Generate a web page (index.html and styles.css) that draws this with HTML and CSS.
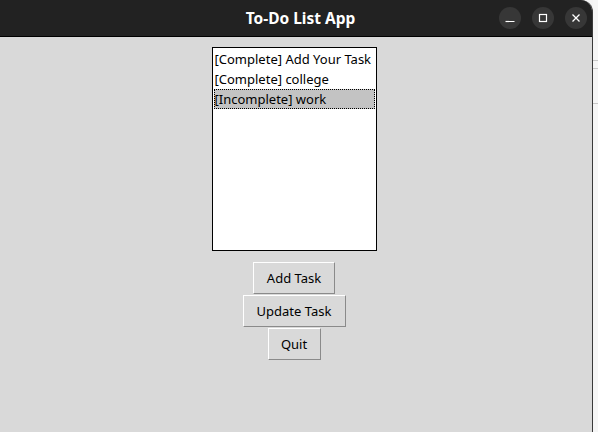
FILE: index.html
```html
<!DOCTYPE html>
<html>
<head>
<meta charset="utf-8">
<link rel="stylesheet" href="styles.css">
</head>
<body>
<div class="screen">
  <div class="window">
    <div class="titlebar">
      <div class="title">To-Do List App</div>
      <div class="controls">
        <div class="ctl"><svg width="22" height="22" viewBox="0 0 22 22"><line x1="6.5" y1="14.5" x2="15.5" y2="14.5" stroke="#fff" stroke-width="1.2"/></svg></div>
        <div class="ctl"><svg width="22" height="22" viewBox="0 0 22 22"><rect x="7.5" y="7.5" width="7" height="7" fill="none" stroke="#fff" stroke-width="1.2"/></svg></div>
        <div class="ctl"><svg width="22" height="22" viewBox="0 0 22 22"><path d="M7.5 7.5 L14.5 14.5 M14.5 7.5 L7.5 14.5" stroke="#fff" stroke-width="1.3"/></svg></div>
      </div>
    </div>
    <div class="content">
      <div class="listbox">
        <div class="item">[Complete] Add Your Task</div>
        <div class="item">[Complete] college</div>
        <div class="item selected">[Incomplete] work</div>
      </div>
      <div class="buttons">
        <button class="btn btn-add">Add Task</button>
        <button class="btn btn-update">Update Task</button>
        <button class="btn btn-quit">Quit</button>
      </div>
    </div>
  </div>
  <div class="behind">
    <div class="bh-line l1"></div>
    <div class="bh-line l2"></div>
    <div class="bh-line l3"></div>
  </div>
</div>
</body>
</html>
```

FILE: styles.css
```css
html, body {
  margin: 0;
  padding: 0;
  width: 598px;
  height: 432px;
  overflow: hidden;
  background: #f4f4f4;
}
.screen {
  display: flex;
  width: 598px;
  height: 432px;
}
.window {
  width: 593px;
  height: 432px;
  display: flex;
  flex-direction: column;
  background: #d9d9d9;
  border-top-right-radius: 12px;
  overflow: hidden;
  border-right: 1px solid #3a3a3a;
  box-sizing: border-box;
}
.titlebar {
  height: 36px;
  flex: none;
  background: #222222;
  border-bottom: 1px solid #000;
  position: relative;
  display: flex;
  align-items: center;
  justify-content: center;
}
.title {
  color: #ffffff;
  font-family: "Noto Sans", "Open Sans", sans-serif;
  font-weight: bold;
  font-size: 15.5px;
  margin-left: 9px;
}
.controls {
  position: absolute;
  right: 5px;
  top: 7px;
  display: flex;
  gap: 11px;
}
.ctl {
  width: 22px;
  height: 22px;
  border-radius: 50%;
  background: #373737;
}
.ctl svg { display: block; }
.content {
  flex: 1;
  display: flex;
  flex-direction: column;
  align-items: center;
  padding-top: 10px;
  padding-right: 4px;
}
.listbox {
  width: 165px;
  height: 204px;
  box-sizing: border-box;
  border: 1px solid #000;
  background: #fff;
  padding: 1px;
  font-family: "Noto Sans", "Open Sans", sans-serif;
  font-size: 13px;
  color: #000;
}
.item {
  height: 20px;
  line-height: 20px;
  padding-left: 1px;
  white-space: nowrap;
  box-sizing: border-box;
}
.selected {
  background: #c3c3c3;
  outline: 1px dotted #000;
  outline-offset: -1px;
}
.buttons {
  display: flex;
  flex-direction: column;
  align-items: center;
  gap: 1px;
  margin-top: 11px;
}
.btn {
  height: 32px;
  box-sizing: border-box;
  background: #d9d9d9;
  border: 1px solid;
  border-color: #ffffff #8a8a8a #8a8a8a #ffffff;
  font-family: "Noto Sans", "Open Sans", sans-serif;
  font-size: 13px;
  color: #000;
  padding: 0;
  margin: 0;
}
.btn-add { width: 82px; }
.btn-update { width: 103px; }
.btn-quit { width: 53px; }
.behind {
  flex: 1;
  background: #f6f6f6;
  position: relative;
}
.bh-line {
  position: absolute;
  left: 0;
  right: 0;
  height: 1px;
  background: #c8c8c8;
}
.l1 { top: 60px; }
.l2 { top: 68px; }
.l3 { top: 103px; }
```
